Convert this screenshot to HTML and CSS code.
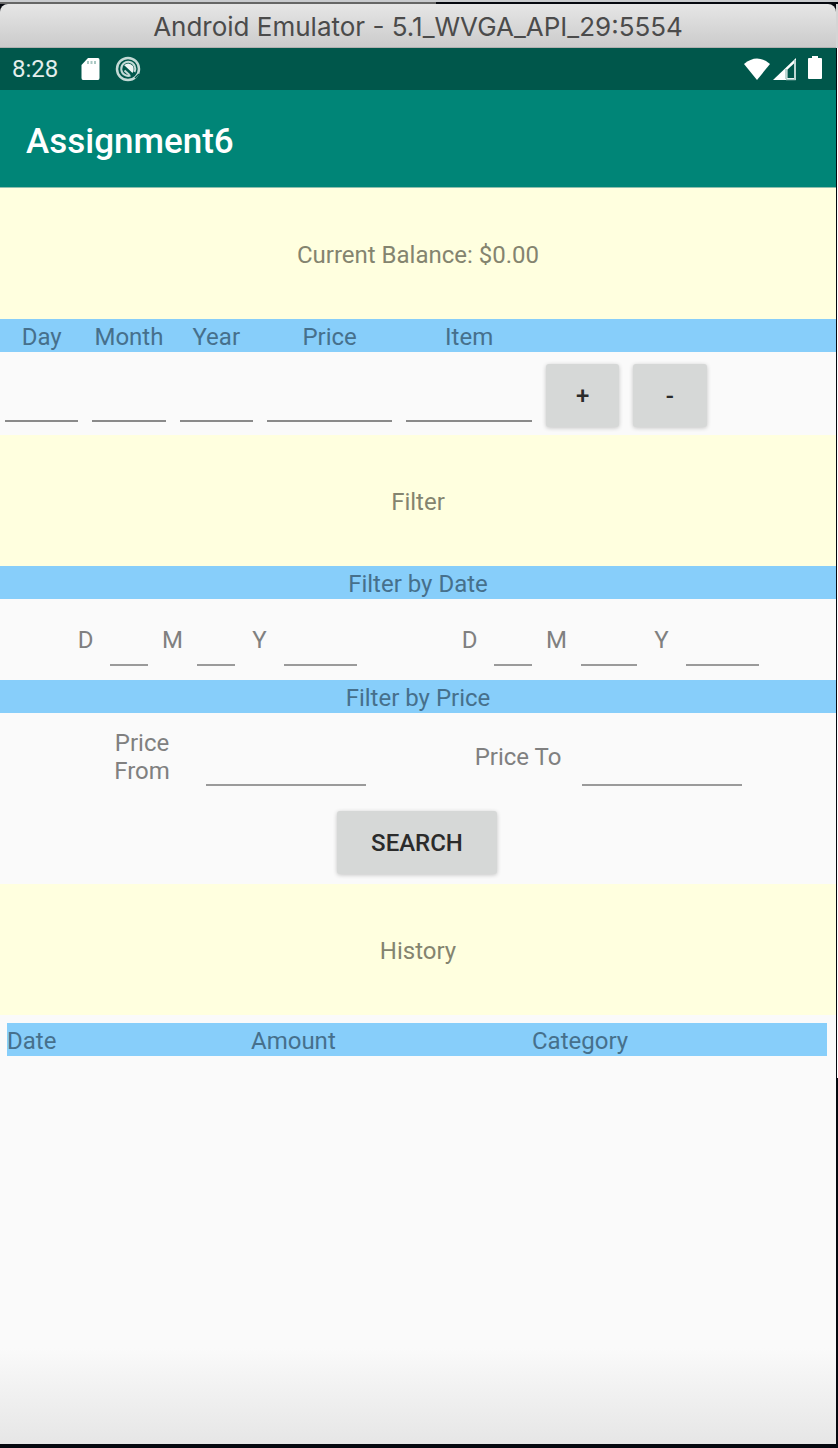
FILE: index.html
```html
<!DOCTYPE html>
<html lang="en">
<head>
<meta charset="utf-8">
<title>Android Emulator - 5.1_WVGA_API_29:5554</title>
<link rel="stylesheet" href="styles.css">
</head>
<body class="desktop">
<div class="window">
  <header class="titlebar">Android Emulator - 5.1_WVGA_API_29:5554</header>
  <div class="statusbar">
    <span class="clock">8:28</span>
    <svg class="sd" viewBox="0 0 20 24" width="20" height="24" aria-hidden="true"><path fill="#fff" d="M8 1h10q1.500 0 1.500 2v18q0 2-1.500 2H3q-1.500 0-1.500-2V8z"/><path stroke="#a9c8c3" stroke-width="2" d="M8 4v3M11.500 4v3M15 4v3"/></svg>
    <svg viewBox="0 0 28 28" width="28" height="28" aria-hidden="true"><circle cx="14" cy="14" r="11" fill="none" stroke="#c3dad6" stroke-width="2.500"/><path fill="none" stroke="#c3dad6" stroke-width="2" d="M16.500 20.500A7 7 0 1 1 20.500 17"/><path fill="#eef5f4" d="M10 10q5-3.500 9 1 1.500 4-.5 7z"/><path stroke="#c3dad6" stroke-width="2" d="M10.500 15.500l5 4.500"/><path stroke="#00574b" stroke-width="1.500" d="M21 23l4-4"/></svg>
    <span class="system">
      <svg viewBox="0 0 26 24" width="26" height="24" aria-hidden="true"><path fill="#fff" d="M0 7Q13-4 26 7L13 23z"/></svg>
      <svg viewBox="0 0 24 24" width="24" height="24" aria-hidden="true"><path fill="#fff" d="M0 23L23 1v22z"/><path fill="#00574b" d="M14.500 12.500L21 6.500V21h-6.500z"/><path fill="none" stroke="#a9cac5" stroke-width="1.500" d="M13 22V12M22 3v19.500H13"/></svg>
      <svg class="battery" viewBox="0 0 16 24" width="16" height="24" aria-hidden="true"><path fill="#fff" d="M5 0h6v2h3q1 0 1 1v19q0 1-1 1H2q-1 0-1-1V3q0-1 1-1h3z"/></svg>
    </span>
  </div>
  <div class="appbar"><h1>Assignment6</h1></div>
  <main class="screen">
    <h2 class="panel">Current Balance: $0.00</h2>
    <div class="entry heads">
      <label for="day">Day</label><label for="month">Month</label><label for="year">Year</label><label for="price">Price</label><label for="item">Item</label>
    </div>
    <form class="entry fields">
      <input id="day" type="text"><input id="month" type="text"><input id="year" type="text"><input id="price" type="text"><input id="item" type="text">
      <button type="button">+</button><button type="button">-</button>
    </form>
    <h2 class="panel">Filter</h2>
    <h3 class="band">Filter by Date</h3>
    <form class="dates">
      <div class="group">
        <label for="d1">D</label><input id="d1" class="w-s" type="text">
        <label for="m1">M</label><input id="m1" class="w-s" type="text">
        <label for="y1">Y</label><input id="y1" class="w-l" type="text">
      </div>
      <div class="group">
        <label for="d2">D</label><input id="d2" class="w-s" type="text">
        <label for="m2">M</label><input id="m2" class="w-m" type="text">
        <label for="y2">Y</label><input id="y2" class="w-l" type="text">
      </div>
    </form>
    <h3 class="band">Filter by Price</h3>
    <form class="prices">
      <div class="group"><label for="from">Price From</label><input id="from" type="text"></div>
      <div class="group"><label for="to">Price To</label><input id="to" type="text"></div>
    </form>
    <div class="actions"><button class="search" type="button">SEARCH</button></div>
    <h2 class="panel">History</h2>
    <table class="history">
      <thead><tr><th class="c-date">Date</th><th class="c-amount">Amount</th><th>Category</th></tr></thead>
    </table>
  </main>
</div>
</body>
</html>
```
FILE: styles.css
```css
* { box-sizing: border-box; }

.desktop {
  margin: 0;
  min-height: 100vh;
  display: flex;
  padding: 4px 2px 4px 0;
  background:
    linear-gradient(#c9cbce, #c9cbce) top / 100% 2px no-repeat,
    linear-gradient(#fff, #fff) right 48px / 1px 1030px no-repeat,
    linear-gradient(90deg, #666 52%, #05080f 52%) top / 100% 4px no-repeat,
    linear-gradient(#d5d5d5, #d5d5d5) right top / 2px 48px no-repeat,
    #05080f;
  font-family: Roboto, sans-serif;
  font-size: 24px;
  line-height: 28px;
  color: #808080;
}

.window {
  flex: 1;
  min-width: 0;
  display: flex;
  flex-direction: column;
}

.titlebar {
  padding: 9px 0 7px;
  border-radius: 8px 8px 0 0;
  border-bottom: 1px solid #b0b0b0;
  background: linear-gradient(#e6e6e6, #cbcbcb);
  font-family: Inter, sans-serif;
  font-size: 26px;
  line-height: 27px;
  text-align: center;
  color: #4b4b4b;
  white-space: nowrap;
}

.statusbar {
  display: flex;
  align-items: center;
  height: 42px;
  padding: 0 13px 0 12px;
  background: #00574b;
  color: #e4eeec;
}
.clock { margin-right: 22px; }
.sd { margin-right: 14px; }
.system {
  display: flex;
  align-items: center;
  gap: 3px;
  margin-left: auto;
}
.battery { margin-left: 7px; margin-bottom: 3px; }

.appbar {
  padding: 38px 26px 31px;
  background: #008577;
  border-bottom: 1px solid #8fbfae;
}
h1 {
  margin: 0;
  font-size: 35px;
  font-weight: 500;
  line-height: 28px;
  color: #fff;
}

.screen {
  flex: 1;
  background:
    linear-gradient(#fafafa, #e6e6e6) bottom / 100% 96px no-repeat,
    #fafafa;
}

.panel {
  margin: 0;
  padding: 53px 0 50px;
  background: #ffffdf;
  font-size: 24px;
  font-weight: 400;
  text-align: center;
  color: #84846f;
}

.band, .heads, th {
  background: #87cefa;
  color: #46708c;
}
.band {
  margin: 0;
  padding: 4px 0 1px;
  font-size: 24px;
  font-weight: 400;
  text-align: center;
}

.entry {
  display: grid;
  grid-template-columns: 73fr 73fr 73fr 125fr 125fr 73fr 73fr 115fr;
  column-gap: 14px;
  padding-left: 5px;
}
.heads {
  padding-top: 4px;
  padding-bottom: 1px;
  text-align: center;
}
.fields { padding-top: 12px; padding-bottom: 8px; }

input {
  min-width: 0;
  width: 100%;
  height: 58px;
  padding: 0;
  border: 0;
  border-bottom: 2px solid #8a8a8a;
  border-radius: 0;
  background: transparent;
  font: inherit;
  color: #212121;
  outline: 0;
}

button {
  height: 63px;
  padding: 0;
  border: 0;
  border-radius: 3px;
  background: #d6d8d7;
  box-shadow: 0 1px 4px rgba(0, 0, 0, 0.22);
  font: 500 24px/28px Roboto, sans-serif;
  color: #2b2b2b;
}

.dates, .prices {
  display: flex;
  justify-content: center;
  gap: 88px;
  padding-right: 2px;
}
.group { display: flex; align-items: center; }
.group input { margin: 0 7px; border-color: #9a9a9a; }

.dates { padding-top: 9px; padding-bottom: 14px; }
.dates .group { align-items: flex-end; }
.dates label {
  width: 35px;
  padding-bottom: 12px;
  text-align: center;
}
.group .w-s { width: 38px; }
.group .w-m { width: 56px; }
.group .w-l { width: 73px; }

.prices { padding-top: 15px; padding-bottom: 11px; }
.prices label {
  width: 114px;
  padding: 0 12px;
  text-align: center;
}
.prices input { width: 160px; }

.actions {
  display: flex;
  justify-content: center;
  padding: 14px 2px 10px 0;
}
.search { width: 160px; }

.history {
  width: calc(100% - 16px);
  margin: 8px 9px 0 7px;
  border-collapse: collapse;
  table-layout: fixed;
}
th {
  padding: 4px 0 1px;
  font-weight: 400;
  text-align: left;
}
.c-date { width: 244px; }
.c-amount { width: 281px; }
```
